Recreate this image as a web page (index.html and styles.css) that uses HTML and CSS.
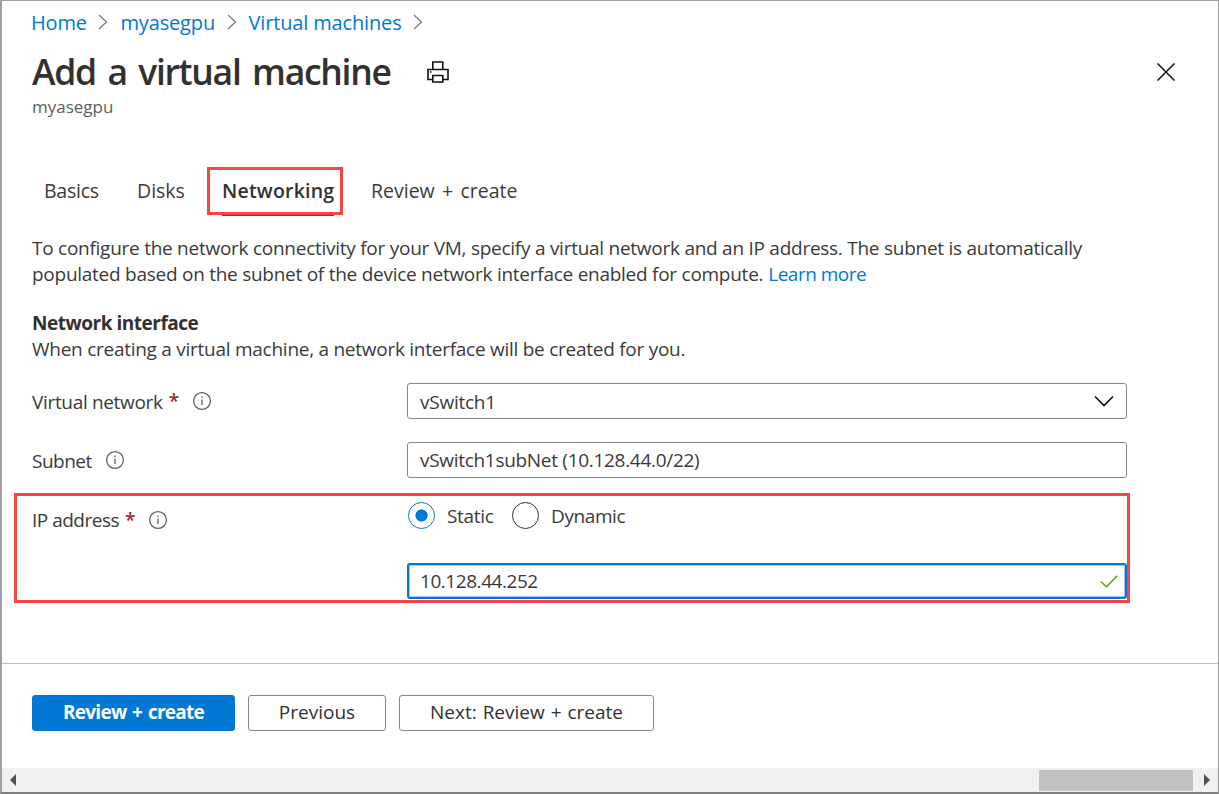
FILE: index.html
```html
<!DOCTYPE html>
<html lang="en">
<head>
<meta charset="utf-8">
<title>Add a virtual machine</title>
<link rel="stylesheet" href="styles.css">
</head>
<body>
<div class="blade">
  <nav class="breadcrumb">
    <a class="crumb-home">Home</a>
    <svg class="sep" width="10" height="18" viewBox="0 0 10 18"><path d="M1 2l7.5 7L1 16"/></svg>
    <a class="crumb-device">myasegpu</a>
    <svg class="sep" width="10" height="18" viewBox="0 0 10 18"><path d="M1 2l7.5 7L1 16"/></svg>
    <a class="crumb-vms">Virtual machines</a>
    <svg class="sep" width="10" height="18" viewBox="0 0 10 18"><path d="M1 2l7.5 7L1 16"/></svg>
  </nav>
  <header class="title-row">
    <h1><span>Add a virtual machine</span></h1>
    <svg class="printer" width="22" height="22" viewBox="0 0 22 22"><path d="M5.800 8.500V1h10v7.500M5.500 18.500H1v-10h20v10h-4.500M5.800 14.500h10V21h-10z"/><path class="dot" d="M3 11h1.500"/></svg>
    <svg class="close" width="18" height="18" viewBox="0 0 18 18"><path d="M.5.5l17 17M17.500.5l-17 17"/></svg>
  </header>
  <div class="subtitle"><span>myasegpu</span></div>
  <div class="tabs">
    <span class="tab tab-basics">Basics</span>
    <span class="tab tab-disks">Disks</span>
    <span class="tab tab-active"><span class="tab-label">Networking</span></span>
    <span class="tab tab-review">Review + create</span>
  </div>
  <div class="description">
    <div><span class="desc-1">To configure the network connectivity for your VM, specify a virtual network and an IP address. The subnet is automatically</span></div>
    <div><span class="desc-2">populated based on the subnet of the device network interface enabled for compute.</span><a class="learn">Learn more</a></div>
  </div>
  <section class="section">
    <h2><span>Network interface</span></h2>
    <div><span class="desc-3">When creating a virtual machine, a network interface will be created for you.</span></div>
  </section>
  <div class="field-row row-network">
    <div class="label"><span class="lbl-network">Virtual network</span><b class="req">*</b>
      <svg class="info" width="20" height="20" viewBox="0 0 20 20"><circle cx="10" cy="10" r="8.400"/><path d="M10 8.500v5.500M10 5.500v1.500"/></svg></div>
    <div class="input"><span class="val-switch">vSwitch1</span>
      <svg class="chevron" width="20" height="12" viewBox="0 0 20 12"><path d="M1 1.500l9 9 9-9"/></svg></div>
  </div>
  <div class="field-row row-subnet">
    <div class="label"><span class="lbl-subnet">Subnet</span>
      <svg class="info" width="20" height="20" viewBox="0 0 20 20"><circle cx="10" cy="10" r="8.400"/><path d="M10 8.500v5.500M10 5.500v1.500"/></svg></div>
    <div class="input"><span class="val-subnet">vSwitch1subNet (10.128.44.0/22)</span></div>
  </div>
  <div class="ip-box">
    <div class="label label-ip"><span class="lbl-ip">IP address</span><b class="req">*</b>
      <svg class="info" width="20" height="20" viewBox="0 0 20 20"><circle cx="10" cy="10" r="8.400"/><path d="M10 8.500v5.500M10 5.500v1.500"/></svg></div>
    <div class="ip-fields">
      <div class="radios">
        <span class="radio checked"></span><span class="lbl-static">Static</span>
        <span class="radio"></span><span class="lbl-dynamic">Dynamic</span>
      </div>
      <div class="input focused"><span class="val-ip">10.128.44.252</span>
        <svg class="check" width="18" height="13" viewBox="0 0 18 13"><path d="M.7 6.500l5.800 5.300L17.300.7"/></svg></div>
    </div>
  </div>
  <footer class="footer">
    <button class="btn primary"><span>Review + create</span></button>
    <button class="btn previous"><span>Previous</span></button>
    <button class="btn next"><span>Next: Review + create</span></button>
  </footer>
  <div class="scrollbar">
    <svg width="6" height="12" viewBox="0 0 6 12"><path d="M6 0v12L0 6z"/></svg>
    <span class="thumb"></span>
    <svg width="6" height="12" viewBox="0 0 6 12"><path d="M0 0v12l6-6z"/></svg>
  </div>
</div>
</body>
</html>
```
FILE: styles.css
```css
* { box-sizing: border-box; }
body {
  margin: 0;
  background: #fff;
  color: #3b3a39;
  font: 19px/26px "Open Sans", "Noto Sans", sans-serif;
}
svg { display: block; flex: none; fill: none; stroke: #323130; }
span, a { white-space: nowrap; }
.blade {
  display: flex;
  flex-direction: column;
  width: 1219px;
  height: 794px;
  border: 1px solid #a0a0a0;
  border-left-width: 2px;
  border-bottom: 2px solid #808080;
  overflow: hidden;
}
.breadcrumb {
  display: flex;
  align-items: center;
  height: 43px;
  padding-left: 29px;
  font-size: 20px;
  letter-spacing: -0.15px;
  color: #0078d4;
}
.sep { stroke: #767472; stroke-width: 1.2; margin: 0 12px 2px 11.5px; }
.title-row {
  display: flex;
  align-items: center;
  height: 57px;
  padding: 0 43px 2px 30px;
}
h1 {
  margin: 0;
  width: 395px;
  font-size: 35.5px;
  font-weight: 600;
  line-height: 55px;
  letter-spacing: -1.3px;
  word-spacing: 3.7px;
  color: #323130;
}
.printer { stroke: #111; stroke-width: 1.6; }
.close { margin-left: auto; stroke: #111; stroke-width: 1.5; }
.subtitle { height: 66px; padding-left: 30px; font-size: 17px; line-height: 12px; color: #605e5c; }
.tabs { display: flex; height: 49px; padding-left: 42px; line-height: 48px; font-size: 19.5px; }
.tab-basics { width: 93px; letter-spacing: -0.25px; }
.tab-disks { width: 70px; }
.tab-active {
  width: 136px;
  height: 48px;
  margin-right: 28px;
  border: 3px solid #fb4343;
  padding-left: 12px;
  line-height: 42px;
  font-weight: 600;
  letter-spacing: 0.2px;
  color: #323130;
}
.tab-label { display: inline-block; height: 46px; border-bottom: 1px solid #0f5fa8; }
.tab-review { word-spacing: 2.2px; }
.description { height: 75px; margin-top: 19px; padding-left: 30px; }
.description div { display: flex; }
.desc-1, .desc-2, .desc-3 { letter-spacing: -0.262px; }
.learn { margin-left: 5px; color: #0078d4; letter-spacing: -0.5px; }
.section { height: 73px; padding-left: 30px; }
h2 {
  margin: 0;
  font-size: 19px;
  line-height: 26px;
  font-weight: 700;
  letter-spacing: -0.48px;
  color: #323130;
}
.field-row { display: flex; height: 36px; margin-bottom: 23px; padding-left: 30px; }
.row-subnet { margin-bottom: 15px; }
.label { display: flex; align-items: center; width: 375px; }
.field-row .label span { padding-top: 1px; }
.lbl-network { letter-spacing: -0.33px; }
.lbl-subnet { letter-spacing: -0.5px; }
.lbl-ip { letter-spacing: -0.5px; }
.req { color: #a4262c; margin-left: 6px; font-weight: 600; }
.info { margin-left: 13px; stroke: #605e5c; stroke-width: 1.3; }
.lbl-subnet + .info { margin-left: 13.500px; }
.input {
  display: flex;
  align-items: center;
  justify-content: space-between;
  width: 720px;
  height: 36px;
  padding: 0 12px;
  border: 1px solid #8a8886;
  border-radius: 3px;
}
.val-switch { padding-top: 1px; letter-spacing: -0.25px; }
.val-subnet { letter-spacing: -0.3px; }
.val-ip { letter-spacing: -0.45px; }
.chevron { stroke: #111; stroke-width: 1.6; }
.ip-box {
  display: flex;
  width: 1116px;
  height: 110px;
  margin-left: 12px;
  padding-left: 15px;
  border: 3px solid #fb4343;
}
.label-ip { height: 48px; }
.ip-fields { flex: none; width: 720px; }
.radios { display: flex; align-items: center; height: 40px; margin-bottom: 27px; }
.radio { width: 27px; height: 27px; margin: 0 12px 1px 1px; border: 1px solid #323130; border-radius: 50%; }
.radio.checked { border-color: #0078d4; background: radial-gradient(circle, #0078d4 5.700px, transparent 6.400px); }
.lbl-static { width: 64px; letter-spacing: -0.3px; }
.lbl-dynamic { letter-spacing: -0.4px; }
.focused { border: 2px solid #0078d4; box-shadow: inset 0 0 0 1px #9ccbf0; padding: 0 7px 0 11px; }
.check { stroke: #57a300; stroke-width: 1.5; }
.footer {
  display: flex;
  gap: 13px;
  height: 105px;
  margin: 60px 0 0;
  padding: 31px 0 0 30px;
  border-top: 1px solid #bdbdbd;
}
.btn {
  height: 36px;
  padding: 0 0 2px;
  font: 500 19px/32px "Open Sans", "Noto Sans", sans-serif;
  color: #323130;
  background: #fff;
  border: 1px solid #8a8886;
  border-radius: 3px;
}
.primary {
  width: 203px;
  background: #0078d4;
  border-color: #0078d4;
  color: #fff;
  font-weight: 700;
  letter-spacing: -0.75px;
  word-spacing: 1.500px;
}
.previous { width: 138px; }
.next { width: 255px; word-spacing: 1px; }
.scrollbar { display: flex; align-items: center; height: 24px; padding: 0 8px; background: #f0f0f0; }
.scrollbar svg { fill: #505050; stroke: none; }
.thumb { width: 154px; height: 21px; margin: 1px 11px 0 auto; background: #c1c1c1; }
```
